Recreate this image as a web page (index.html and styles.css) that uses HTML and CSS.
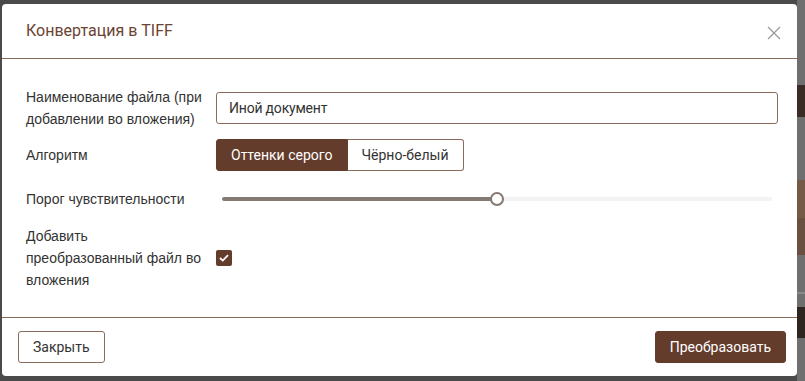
FILE: index.html
```html
<!DOCTYPE html>
<html lang="ru">
<head>
    <meta charset="UTF-8">
    <meta name="viewport" content="width=device-width, initial-scale=1.0">
    <title>Конвертация в TIFF</title>
    <link rel="stylesheet" href="styles.css">
</head>
<body>
    <div class="backdrop"></div>
    <div class="modal">
        <div class="modal-header">
            <span class="modal-title">Конвертация в TIFF</span>
            <button class="close" type="button" aria-label="Закрыть">
                <svg width="14" height="14" viewBox="0 0 14 14">
                    <path d="M1 1 L13 13 M13 1 L1 13" stroke="#999" stroke-width="1.2" fill="none"/>
                </svg>
            </button>
        </div>

        <div class="modal-body">
            <div class="row row-name">
                <label class="row-label" for="fileName">Наименование файла (при добавлении во вложения)</label>
                <div class="row-control">
                    <input class="text-input" type="text" id="fileName" value="Иной документ">
                </div>
            </div>

            <div class="row row-algo">
                <div class="row-label">Алгоритм</div>
                <div class="row-control">
                    <div class="toggle">
                        <button class="toggle-btn active" type="button">Оттенки серого</button>
                        <button class="toggle-btn" type="button">Чёрно-белый</button>
                    </div>
                </div>
            </div>

            <div class="row row-range">
                <div class="row-label">Порог чувствительности</div>
                <div class="row-control">
                    <div class="slider">
                        <div class="slider-fill" style="width: 50%"></div>
                        <div class="slider-thumb" style="left: 50%"></div>
                    </div>
                </div>
            </div>

            <div class="row row-attach">
                <div class="row-label">Добавить преобразованный файл во вложения</div>
                <div class="row-control">
                    <span class="checkbox">
                        <svg width="10" height="8" viewBox="0 0 10 8">
                            <path d="M1 4 L3.8 6.6 L9 1.2" stroke="#fff" stroke-width="1.8" fill="none"/>
                        </svg>
                    </span>
                </div>
            </div>
        </div>

        <div class="modal-footer">
            <button class="btn btn-outline" type="button">Закрыть</button>
            <button class="btn btn-primary" type="button">Преобразовать</button>
        </div>
    </div>
</body>
</html>
```

FILE: styles.css
```css
body {
    margin: 0;
    padding: 4px 8px 0 2px;
    font-family: "Liberation Sans", Arial, sans-serif;
    font-size: 14px;
    color: #333;
    background-color: #4a4a4a;
    height: 381px;
    box-sizing: border-box;
    overflow: hidden;
}
.backdrop {
    position: fixed;
    top: 0;
    right: 0;
    width: 8px;
    height: 100%;
    background: linear-gradient(to bottom,
        #6f6f6f 0, #6f6f6f 85px,
        #3a2b24 85px, #3a2b24 117px,
        #6f6f6f 117px, #6f6f6f 180px,
        #765a48 180px, #765a48 218px,
        #6a5040 218px, #6a5040 255px,
        #6f6f6f 255px, #6f6f6f 292px,
        #8a8a8a 292px, #8a8a8a 294px,
        #6f6f6f 294px, #6f6f6f 307px,
        #2e2420 307px, #2e2420 338px,
        #6f6f6f 338px);
}
.modal {
    position: relative;
    width: 795px;
    background-color: #fff;
    border-radius: 4px;
}
.modal-header {
    display: flex;
    align-items: center;
    justify-content: space-between;
    height: 54px;
    padding: 0 10px 0 24px;
    border-bottom: 1px solid #8b6b5c;
}
.modal-title {
    font-family: Roboto, sans-serif;
    font-size: 16px;
    color: #6b4332;
    margin-top: -2px;
}
.close {
    border: none;
    background: none;
    padding: 6px;
    margin-top: 4px;
    line-height: 0;
}
.modal-body {
    padding: 27px 19px 26px 24px;
}
.row {
    display: flex;
    align-items: center;
}
.row-label {
    width: 180px;
    margin-right: 10px;
    flex-shrink: 0;
    line-height: 22px;
    color: #333;
}
.row-control {
    flex: 1;
}
.row-algo {
    margin-top: 9px;
}
.row-range {
    margin-top: 17px;
}
.row-attach {
    margin-top: 15px;
}
.text-input {
    display: block;
    width: 100%;
    box-sizing: border-box;
    height: 32px;
    padding: 0 12px;
    border: 1px solid #8b6b5c;
    border-radius: 3px;
    font-family: Roboto, sans-serif;
    font-size: 14px;
    letter-spacing: -0.2px;
    color: #333;
    outline: none;
}
.toggle {
    display: inline-flex;
}
.toggle-btn {
    height: 32px;
    padding: 0 14px;
    border: 1px solid #8b6b5c;
    background-color: #fff;
    font-family: Roboto, sans-serif;
    font-size: 14px;
    color: #333;
}
.toggle-btn:first-child {
    border-radius: 3px 0 0 3px;
}
.toggle-btn:last-child {
    border-left: none;
    border-radius: 0 3px 3px 0;
}
.toggle-btn.active {
    background-color: #643c2b;
    border-color: #643c2b;
    color: #fff;
}
.slider {
    position: relative;
    height: 4px;
    margin: 0 6px;
    border-radius: 2px;
    background-color: #f2f2f2;
}
.slider-fill {
    height: 100%;
    border-radius: 2px;
    background-color: #857a72;
}
.slider-thumb {
    position: absolute;
    top: 50%;
    width: 14px;
    height: 14px;
    box-sizing: border-box;
    margin: -7px 0 0 -7px;
    border: 2px solid #857a72;
    border-radius: 50%;
    background-color: #fff;
}
.checkbox {
    display: flex;
    align-items: center;
    justify-content: center;
    width: 16px;
    height: 16px;
    border-radius: 2px;
    background-color: #643c2b;
}
.modal-footer {
    display: flex;
    justify-content: space-between;
    padding: 13px 11px 13px 16px;
    border-top: 1px solid #8b6b5c;
}
.btn {
    height: 32px;
    padding: 0 14px;
    border-radius: 3px;
    font-family: Roboto, sans-serif;
    font-size: 14px;
}
.btn-outline {
    border: 1px solid #8b6b5c;
    background-color: #fff;
    color: #333;
}
.btn-primary {
    border: 1px solid #643c2b;
    background-color: #643c2b;
    color: #fff;
}
```
